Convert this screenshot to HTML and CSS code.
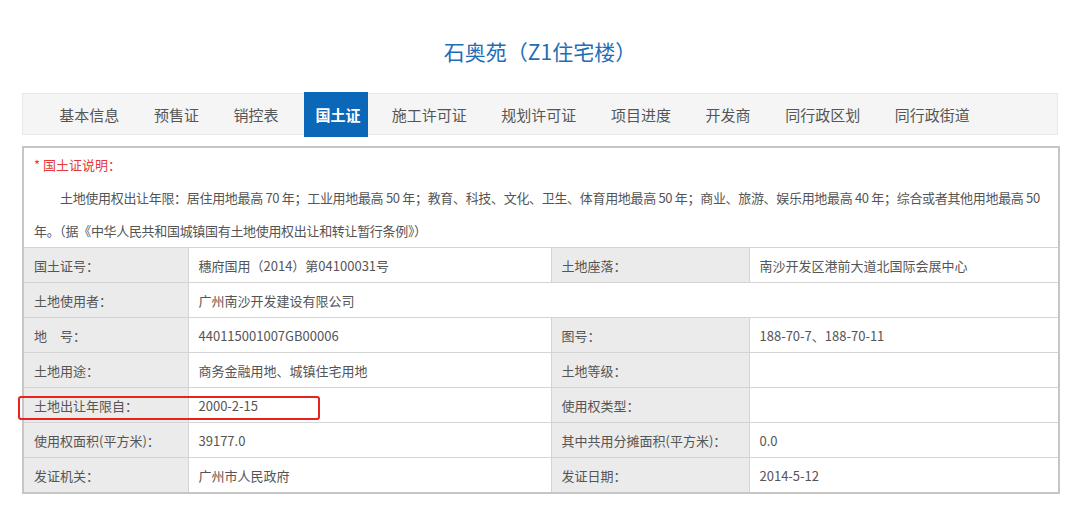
FILE: index.html
```html
<!DOCTYPE html>
<html lang="zh-CN">
<head>
    <meta charset="UTF-8">
    <meta name="viewport" content="width=device-width, initial-scale=1.0">
    <title>石奥苑（Z1住宅楼）- 国土证</title>
    <link rel="stylesheet" href="styles.css">
</head>
<body>
    <div class="page">
        <h1 class="title">石奥苑（Z1住宅楼）</h1>

        <ul class="tabs">
            <li>基本信息</li>
            <li>预售证</li>
            <li>销控表</li>
            <li class="active">国土证</li>
            <li>施工许可证</li>
            <li>规划许可证</li>
            <li>项目进度</li>
            <li>开发商</li>
            <li>同行政区划</li>
            <li>同行政街道</li>
        </ul>

        <div class="table-wrap">
            <table class="info">
                <colgroup>
                    <col class="c1">
                    <col class="c2">
                    <col class="c3">
                    <col class="c4">
                </colgroup>
                <tr>
                    <td colspan="4" class="note">
                        <div class="note-title">* 国土证说明：</div>
                        <p>土地使用权出让年限：居住用地最高 70 年；工业用地最高 50 年；教育、科技、文化、卫生、体育用地最高 50 年；商业、旅游、娱乐用地最高 40 年；综合或者其他用地最高 50 年。（据《中华人民共和国城镇国有土地使用权出让和转让暂行条例》）</p>
                    </td>
                </tr>
                <tr>
                    <th>国土证号：</th>
                    <td>穗府国用（2014）第04100031号</td>
                    <th>土地座落：</th>
                    <td>南沙开发区港前大道北国际会展中心</td>
                </tr>
                <tr>
                    <th>土地使用者：</th>
                    <td colspan="3">广州南沙开发建设有限公司</td>
                </tr>
                <tr>
                    <th>地　号：</th>
                    <td>440115001007GB00006</td>
                    <th>图号：</th>
                    <td>188-70-7、188-70-11</td>
                </tr>
                <tr>
                    <th>土地用途：</th>
                    <td>商务金融用地、城镇住宅用地</td>
                    <th>土地等级：</th>
                    <td></td>
                </tr>
                <tr>
                    <th>土地出让年限自：</th>
                    <td>2000-2-15</td>
                    <th>使用权类型：</th>
                    <td></td>
                </tr>
                <tr>
                    <th>使用权面积(平方米)：</th>
                    <td>39177.0</td>
                    <th>其中共用分摊面积(平方米)：</th>
                    <td>0.0</td>
                </tr>
                <tr>
                    <th>发证机关：</th>
                    <td>广州市人民政府</td>
                    <th>发证日期：</th>
                    <td>2014-5-12</td>
                </tr>
            </table>
            <div class="mark"></div>
        </div>
    </div>
</body>
</html>
```

FILE: styles.css
```css
body {
    margin: 0;
    background: #fff;
    font-family: "Noto Sans CJK SC", "Noto Sans", sans-serif;
    color: #555;
}
.page {
    width: 1036px;
    margin: 0 auto;
    padding-top: 37px;
}
.title {
    margin: 0 0 28px;
    font-size: 21px;
    line-height: 28px;
    font-weight: normal;
    text-align: center;
    color: #1f6db5;
}
.tabs {
    display: flex;
    height: 40px;
    margin: 0;
    padding: 0 0 0 19px;
    list-style: none;
    background: #f5f5f5;
    border: 1px solid #e8e8e8;
}
.tabs li {
    display: flex;
    align-items: center;
    padding: 0 10px;
    margin: 0 7.3px;
    font-size: 15px;
    color: #555;
}
.tabs li.active {
    margin: -2px 6px -3px 8.6px;
    padding: 0 8px 0 11px;
    background: #0b67b7;
    color: #fff;
    font-weight: bold;
}
.table-wrap {
    position: relative;
    margin-top: 11px;
}
.info {
    width: 100%;
    border-collapse: collapse;
    border: 2px solid #c6c6c6;
    font-size: 13px;
    table-layout: fixed;
}
.c1 { width: 165px; }
.c2 { width: 363px; }
.c3 { width: 198px; }
.c4 { width: 310px; }
.info th,
.info td {
    height: 34px;
    padding: 0 10px;
    border: 1px solid #d4d4d4;
    text-align: left;
    font-weight: normal;
    white-space: nowrap;
}
.info th {
    background: #ebebeb;
}
.info td.note {
    height: auto;
    padding: 0 10px;
    white-space: normal;
    line-height: 33px;
}
.note-title {
    color: #e4393c;
    font-size: 13px;
}
.note p {
    margin: 0;
    text-indent: 2em;
    letter-spacing: -0.32px;
}
.mark {
    position: absolute;
    left: -4px;
    top: 250px;
    width: 298px;
    height: 20px;
    border: 2px solid #e8231f;
    border-radius: 3px;
}
```
